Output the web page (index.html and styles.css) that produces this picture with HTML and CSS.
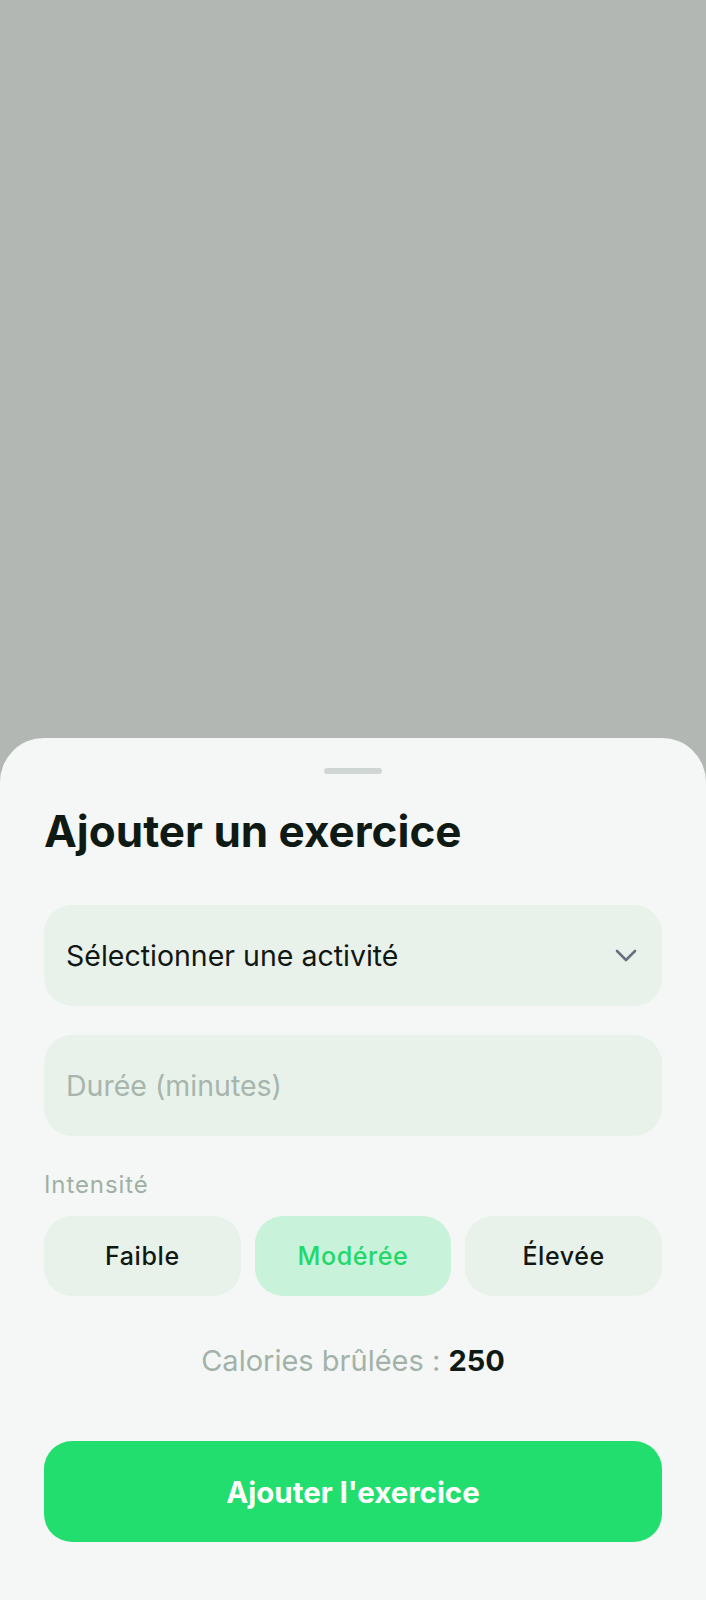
FILE: index.html
```html
<!DOCTYPE html>
<html lang="fr">
<head>
<meta charset="utf-8">
<title>Ajouter un exercice</title>
<link rel="stylesheet" href="styles.css">
</head>
<body>
<div class="screen">
  <div class="sheet">
    <div class="handle"></div>
    <h1 class="title">Ajouter un exercice</h1>
    <div class="field select">
      <span class="field-value">Sélectionner une activité</span>
      <svg class="chevron" width="22" height="14" viewBox="0 0 22 14" aria-hidden="true">
        <polyline points="2,2 11,11 20,2" fill="none" stroke="#687184" stroke-width="2.6" stroke-linecap="round" stroke-linejoin="round"/>
      </svg>
    </div>
    <div class="field">
      <span class="field-placeholder">Durée (minutes)</span>
    </div>
    <div class="label">Intensité</div>
    <div class="segments">
      <div class="segment">Faible</div>
      <div class="segment active">Modérée</div>
      <div class="segment">Élevée</div>
    </div>
    <p class="calories">Calories brûlées : <strong>250</strong></p>
    <div class="primary">Ajouter l'exercice</div>
  </div>
</div>
</body>
</html>
```

FILE: styles.css
```css
* { box-sizing: border-box; }
html, body {
  margin: 0;
  padding: 0;
}
body {
  background: #b2b7b4;
  font-family: Inter, "Noto Sans", "Liberation Sans", sans-serif;
}
.screen {
  min-height: 1600px;
  display: flex;
  flex-direction: column;
  justify-content: flex-end;
}
.sheet {
  background: #f5f7f6;
  border-radius: 44px 44px 0 0;
  padding: 30px 44px 58px;
  display: flex;
  flex-direction: column;
}
.handle {
  width: 58px;
  height: 6px;
  border-radius: 3px;
  background: #d0d6d3;
  align-self: center;
}
.title {
  margin: 31px 0 0;
  font-size: 44px;
  line-height: 52px;
  font-weight: 700;
  color: #0f1a14;
}
.field {
  margin-top: 29px;
  height: 101px;
  border-radius: 28px;
  background: #e8f2eb;
  display: flex;
  align-items: center;
  padding: 0 24px 0 22px;
  font-size: 28.5px;
}
.field.select {
  margin-top: 48px;
  justify-content: space-between;
}
.field-value { color: #111814; }
.field-placeholder { color: #a7b5ac; }
.chevron { display: block; margin-right: 1px; }
.label {
  margin-top: 35px;
  font-size: 24px;
  line-height: 28px;
  letter-spacing: 0.9px;
  color: #9fb0a5;
}
.segments {
  margin-top: 17px;
  display: grid;
  grid-template-columns: repeat(3, 1fr);
  gap: 14px;
}
.segment {
  height: 80px;
  border-radius: 28px;
  background: #e8f2eb;
  display: flex;
  align-items: center;
  justify-content: center;
  font-size: 25px;
  font-weight: 500;
  letter-spacing: 0.6px;
  color: #111814;
}
.segment.active {
  background: #c9f2db;
  color: #22d869;
}
.calories {
  margin: 47px 0 0;
  text-align: center;
  font-size: 29px;
  line-height: 36px;
  color: #a3b2a9;
}
.calories strong {
  color: #0f1a14;
  font-weight: 700;
}
.primary {
  margin-top: 62px;
  height: 101px;
  border-radius: 28px;
  background: #22de6e;
  color: #ffffff;
  display: flex;
  align-items: center;
  justify-content: center;
  font-size: 29.5px;
  font-weight: 700;
}
```
